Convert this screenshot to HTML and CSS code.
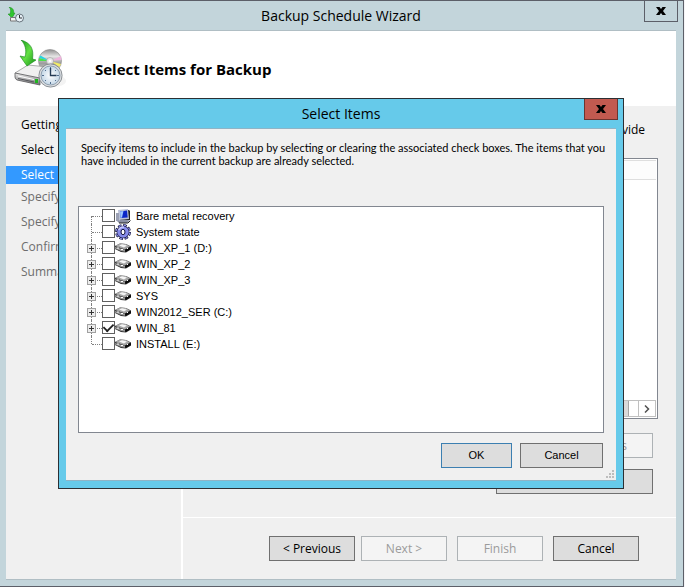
FILE: index.html
```html
<!DOCTYPE html>
<html lang="en">
<head>
<meta charset="utf-8">
<title>Backup Schedule Wizard</title>
<link rel="stylesheet" href="styles.css">
</head>
<body>
<svg class="defs" aria-hidden="true">
  <defs>
    <symbol id="disk" viewBox="0 0 16 16">
      <path d="M0 6 5 3.500 11 4 16 6.500V9.500L11 12.500 6 12 0 9Z" fill="#2c2c2c"/>
      <path d="M0 6 5 3.500 11 4 15 6.500 10 9.500Z" fill="#a8a8a8"/>
      <path d="M4 5.500 7 4.200 12 5.500 9 7.500Z" fill="#f4f4f4"/>
      <path d="M0 7 10 9.800V11.800L6 11 0 8.500Z" fill="#9a9a9a"/>
      <path d="M10 9.800 16 7V9L10.500 12Z" fill="#0a0a0a"/>
      <path d="M2 8h2M6 9.500h2M12 8.500h1" stroke="#fff"/>
    </symbol>
    <symbol id="computer" viewBox="0 0 16 16">
      <path d="M4 3 14 2 15 3V12L5 13Z" fill="#222"/>
      <path d="M3 2 13 1 14 11 4 12Z" fill="#b9c0d6"/>
      <path d="M5 3.500 12 2.500 12.700 9.500 5.500 10Z" fill="#0a25c8"/>
      <path d="M5 3.500 8.500 3 7 9.500 5.500 10Z" fill="#9cc6ff"/>
      <path d="M1 5h3v8H1Z" fill="#9aa0b4"/>
      <path d="M2 13 7 11.500 15 12.500 12 15 4 15Z" fill="#8a90a4"/>
      <path d="M4 15h9l2.500-2.500" fill="none" stroke="#222"/>
    </symbol>
    <symbol id="gear" viewBox="0 0 16 16">
      <circle cx="8" cy="8" r="6.800" fill="none" stroke="#15153c" stroke-width="2.400" stroke-dasharray="3.600 1.740"/>
      <circle cx="8" cy="8" r="6.800" fill="none" stroke="#8d92ea" stroke-width="1.400" stroke-dasharray="2.200 3.140" stroke-dashoffset="-.700"/>
      <circle cx="8" cy="8" r="6.300" fill="#15153c"/>
      <circle cx="8" cy="8" r="5.800" fill="#868bea"/>
      <path d="M3.700 6A5 5 0 0 1 9 3.200" fill="none" stroke="#c3c6ff" stroke-width="1.600"/>
      <ellipse cx="8" cy="8" rx="2" ry="2.700" fill="#fff" stroke="#15153c"/>
    </symbol>
    <symbol id="close" viewBox="0 0 10 8">
      <path d="M0 0h3.500L5 2 6.500 0H10L7 4l3 4H6.500L5 6 3.500 8H0l3-4Z" fill="#000"/>
    </symbol>
  </defs>
</svg>

<main class="window">
  <header class="titlebar">
    <svg class="app-icon" viewBox="0 0 16 16" aria-hidden="true">
      <path d="M1 0C5 1 6 3 5.500 6H7L4 11 0 7h2C3 4 3 2 1 0Z" fill="#2fc52f" stroke="#168a16" stroke-width=".5"/>
      <path d="M2.500 10.500h6v3.500h-6Z" fill="#f2f2f2" stroke="#777"/>
      <circle cx="11.500" cy="11" r="4" fill="#e7f1f8" stroke="#68747c"/>
      <path d="M11.500 8v3H14" fill="none" stroke="#333"/>
    </svg>
    <h1 class="title">Backup Schedule Wizard</h1>
    <button class="close" type="button" aria-label="Close wizard"><svg class="close-icon" aria-hidden="true"><use href="#close"/></svg></button>
  </header>

  <div class="content">
    <div class="banner">
      <svg class="banner-icon" viewBox="0 0 52 50" aria-hidden="true">
        <defs>
          <linearGradient id="arrow" x1="0" y1="0" x2="1" y2="1"><stop offset="0" stop-color="#159a18"/><stop offset=".5" stop-color="#63e044"/><stop offset="1" stop-color="#128d13"/></linearGradient>
          <linearGradient id="disc" x1="0" y1="0" x2="0" y2="1"><stop offset="0" stop-color="#8f8f8f"/><stop offset=".3" stop-color="#e4e4e4"/><stop offset=".6" stop-color="#9c9c9c"/><stop offset="1" stop-color="#e0e0e0"/></linearGradient>
          <linearGradient id="front" x1="0" y1="0" x2="0" y2="1"><stop offset="0" stop-color="#ededed"/><stop offset="1" stop-color="#6f6f72"/></linearGradient>
          <radialGradient id="face"><stop offset="0" stop-color="#fff"/><stop offset="1" stop-color="#c3d6e6"/></radialGradient>
        </defs>
        <ellipse cx="39" cy="41" rx="13" ry="6" fill="#f3f3f3"/>
        <circle cx="36" cy="21" r="11.500" fill="url(#disc)" stroke="#8a8a8a" stroke-width=".6"/>
        <path d="M36 21 25 18 26.500 15.500Z" fill="#27d3e2"/>
        <path d="M36 21 24.500 21 25 18Z" fill="#4ee04a"/>
        <path d="M36 21 47 16 47.500 20Z" fill="#eeb4dc"/>
        <path d="M36 21 47 24 45.500 27Z" fill="#f2ec65"/>
        <circle cx="36" cy="21" r="3.500" fill="#e8e8e8" stroke="#999" stroke-width=".6"/>
        <circle cx="36" cy="21" r="1.300" fill="#fff"/>
        <path d="M1 33 14 25 34 27 27 40Z" fill="#f0f0f0" stroke="#8c8c8c" stroke-width=".7"/>
        <path d="M1 33 26 38V45L3 40Q1 39 1 37Z" fill="url(#front)" stroke="#59595c" stroke-width=".8"/>
        <path d="M4 36 20 39.500" stroke="#fff" stroke-width="1"/>
        <path d="M4 38.500 20 42" stroke="#55565a" stroke-width="1"/>
        <path d="M21 39h3v4h-3Z" fill="#1fb51f"/>
        <path d="M7 0C17 3 20 9 18.500 19L22 20 13 26 6 16 11 17C13 10 11 4 7 0Z" fill="url(#arrow)" stroke="#14851a" stroke-width=".6"/>
        <circle cx="36.500" cy="35.500" r="11.600" fill="#d9dcdf" stroke="#777d84" stroke-width=".8"/>
        <circle cx="36.500" cy="35.500" r="9.500" fill="url(#face)" stroke="#7f90a2" stroke-width=".8"/>
        <path d="M36.500 27v2M36.500 42v2M28 35.500h2M43 35.500h2M31 30l1 1M42 30l-1 1M31 41l1-1M42 41l-1-1" stroke="#516d8e"/>
        <path d="M36.500 28v7.500h6" fill="none" stroke="#243b55" stroke-width="1.400"/>
      </svg>
      <h2 class="heading">Select Items for Backup</h2>
    </div>

    <div class="body">
      <nav class="steps">
        <a class="step done" href="#">Getting</a>
        <a class="step done" href="#">Select B</a>
        <a class="step current" href="#" aria-current="step">Select I</a>
        <a class="step" href="#">Specify</a>
        <a class="step" href="#">Specify</a>
        <a class="step" href="#">Confirm</a>
        <a class="step" href="#">Summa</a>
      </nav>
      <div class="page">
        <section class="pane">
          <p class="hint">provide</p>
          <div class="items">
            <div class="items-head"></div>
            <div class="scroll">
              <span class="thumb"></span>
              <button class="scroll-next" type="button" aria-label="Scroll right"><svg class="chevron" viewBox="0 0 6 8" aria-hidden="true"><path d="M1 .5 4.500 4 1 7.500" fill="none" stroke="#505050" stroke-width="1.500"/></svg></button>
            </div>
          </div>
          <button class="btn remove" type="button" disabled>Items</button>
          <button class="btn advanced" type="button" aria-label="Advanced"></button>
        </section>
        <footer class="actions">
          <button class="btn" type="button">&lt; Previous</button>
          <button class="btn" type="button" disabled>Next &gt;</button>
          <button class="btn apart" type="button" disabled>Finish</button>
          <button class="btn apart" type="button">Cancel</button>
        </footer>
      </div>
    </div>
  </div>

  <div class="dialog" role="dialog" aria-labelledby="dialog-title">
    <header class="titlebar dialog-bar">
      <h2 class="title" id="dialog-title">Select Items</h2>
      <button class="close danger" type="button" aria-label="Close dialog"><svg class="close-icon" aria-hidden="true"><use href="#close"/></svg></button>
    </header>
    <div class="dialog-body">
      <p class="intro">Specify items to include in the backup by selecting or clearing the associated check boxes. The items that you have included in the current backup are already selected.</p>
      <ul class="tree">
        <li class="node"><span class="branch"></span><input class="check" type="checkbox" id="n1"><svg class="icon" aria-hidden="true"><use href="#computer"/></svg><label class="name" for="n1">Bare metal recovery</label></li>
        <li class="node"><span class="branch"></span><input class="check" type="checkbox" id="n2"><svg class="icon" aria-hidden="true"><use href="#gear"/></svg><label class="name" for="n2">System state</label></li>
        <li class="node"><span class="branch"><button class="expand" type="button" aria-label="Expand"></button></span><input class="check" type="checkbox" id="n3"><svg class="icon" aria-hidden="true"><use href="#disk"/></svg><label class="name" for="n3">WIN_XP_1 (D:)</label></li>
        <li class="node"><span class="branch"><button class="expand" type="button" aria-label="Expand"></button></span><input class="check" type="checkbox" id="n4"><svg class="icon" aria-hidden="true"><use href="#disk"/></svg><label class="name" for="n4">WIN_XP_2</label></li>
        <li class="node"><span class="branch"><button class="expand" type="button" aria-label="Expand"></button></span><input class="check" type="checkbox" id="n5"><svg class="icon" aria-hidden="true"><use href="#disk"/></svg><label class="name" for="n5">WIN_XP_3</label></li>
        <li class="node"><span class="branch"><button class="expand" type="button" aria-label="Expand"></button></span><input class="check" type="checkbox" id="n6"><svg class="icon" aria-hidden="true"><use href="#disk"/></svg><label class="name" for="n6">SYS</label></li>
        <li class="node"><span class="branch"><button class="expand" type="button" aria-label="Expand"></button></span><input class="check" type="checkbox" id="n7"><svg class="icon" aria-hidden="true"><use href="#disk"/></svg><label class="name" for="n7">WIN2012_SER (C:)</label></li>
        <li class="node"><span class="branch"><button class="expand" type="button" aria-label="Expand"></button></span><input class="check" type="checkbox" id="n8" checked><svg class="icon" aria-hidden="true"><use href="#disk"/></svg><label class="name" for="n8">WIN_81</label></li>
        <li class="node"><span class="branch"></span><input class="check" type="checkbox" id="n9"><svg class="icon" aria-hidden="true"><use href="#disk"/></svg><label class="name" for="n9">INSTALL (E:)</label></li>
      </ul>
      <div class="dialog-actions">
        <button class="btn ok" type="button">OK</button>
        <button class="btn cancel" type="button">Cancel</button>
      </div>
      <svg class="grip" viewBox="0 0 8 8" aria-hidden="true"><path d="M6 0h2v2H6zM3 3h2v2H3zM6 3h2v2H6zM0 6h2v2H0zM3 6h2v2H3zM6 6h2v2H6z" fill="#bdbdbd"/></svg>
    </div>
  </div>
</main>
</body>
</html>
```

FILE: styles.css
```css
* { box-sizing: border-box; }

body {
  margin: 0;
  padding-right: 1px;
  background: #f4f4f6;
  color: #000;
  font: 12px/16px "Open Sans", "Noto Sans", sans-serif;
}

h1, h2, p, ul { margin: 0; padding: 0; }
button { font: inherit; padding: 0; }
.defs { position: absolute; width: 0; height: 0; }

/* Main window */
.window {
  position: relative;
  display: flex;
  flex-direction: column;
  min-height: 100vh;
  padding: 0 7px 6px 6px;
  background: #c3d5db;
  border: solid #5c5f68;
  border-width: 1px 1px 1px 0;
}

.titlebar {
  position: relative;
  display: flex;
  justify-content: center;
  align-items: center;
  height: 29px;
}
.title { font-size: 14px; line-height: 20px; font-weight: 400; }
.app-icon { position: absolute; left: 2px; top: 6px; width: 16px; height: 16px; }
.close {
  position: absolute;
  top: 0;
  right: -2px;
  display: grid;
  place-items: center;
  width: 34px;
  height: 21px;
  background: none;
  border: 1px solid #5c5f68;
  border-top: 0;
}
.close-icon { width: 10px; height: 8px; }

.content {
  flex: 1;
  display: flex;
  flex-direction: column;
  background: #f0f0f0;
  border: solid #b0bec4;
  border-width: 1px 0;
}
.banner {
  display: flex;
  align-items: center;
  gap: 29px;
  height: 75px;
  padding-left: 8px;
  background: #fff;
}
.banner-icon { width: 52px; height: 50px; margin-bottom: 8px; }
.heading { font-size: 15px; line-height: 20px; font-weight: 700; }

.body { flex: 1; display: flex; }
.steps {
  flex: 0 0 177px;
  display: flex;
  flex-direction: column;
  gap: 7px;
  padding-top: 10px;
  border-right: 2px solid #fff;
}
.step {
  padding-left: 15px;
  line-height: 18px;
  color: #6d6d6d;
  text-decoration: none;
  white-space: nowrap;
  overflow: hidden;
}
.done { color: #000; }
.current { margin-bottom: -3px; background: #3399ff; color: #fff; }

.page { flex: 1; display: flex; flex-direction: column; }
.pane {
  flex: 1;
  display: flex;
  flex-direction: column;
  align-items: flex-end;
  padding: 16px 23px 0 16px;
}
.hint { padding-right: 8px; }
.items {
  display: flex;
  flex-direction: column;
  align-self: stretch;
  height: 261px;
  margin: 20px -5px 14px 0;
  padding: 1px;
  background: #fff;
  border: 1px solid #828790;
}
.items-head { height: 20px; background: #fcfcfc; border: solid #dedede; border-width: 1px 0; }
.scroll { display: flex; justify-content: space-between; height: 17px; margin-top: auto; border: 1px solid #c0c0c0; }
.thumb { width: 427px; background: #dadada; border-right: 1px solid #a6a6a6; }
.scroll-next {
  display: grid;
  place-items: center;
  width: 17px;
  background: #fff;
  border: 0;
  border-left: 1px solid #c0c0c0;
}
.chevron { width: 6px; height: 8px; }

.btn {
  width: 86px;
  height: 25px;
  background: #dddddd;
  border: 1px solid #707070;
  color: #000;
}
.btn:disabled { background: #f4f4f4; border-color: #adb2b5; color: #9b9b9b; }
.remove { width: 83px; margin-bottom: 11px; }
.advanced { width: 157px; }

.actions {
  display: flex;
  justify-content: flex-end;
  gap: 6px;
  height: 62px;
  padding: 18px 37px 0 0;
  border-top: 1px solid #fff;
}
.apart { margin-left: 4px; }

/* Modal dialog over the window */
.dialog {
  position: absolute;
  top: 97px;
  left: 58px;
  right: 59px;
  padding: 0 7px 7px;
  background: #66caea;
  border: 1px solid #2b2f33;
}
.danger { right: -2px; background: #c25a50; border-color: #6b3530; }
.dialog-body {
  position: relative;
  padding: 11px 12px 12px;
  background: #f0f0f0;
  border: solid #8fb4c6;
  border-width: 1px 0;
  font: 11px/13px "Liberation Sans", Arial, sans-serif;
}
.intro {
  min-height: 66px;
  margin-right: -8px;
  padding: 1px 0 0 3px;
  font-family: Lato, "Liberation Sans", sans-serif;
}
.tree {
  min-height: 227px;
  padding: 1px 8px;
  background: #fff;
  border: 1px solid #828790;
  list-style: none;
}
.node { display: flex; align-items: center; height: 16px; }
.branch {
  position: relative;
  display: flex;
  align-items: center;
  width: 15px;
  height: 16px;
}
.branch::before {
  content: "";
  position: absolute;
  left: 4px;
  top: 0;
  bottom: 0;
  border-left: 1px dotted #808080;
}
.branch::after {
  content: "";
  position: absolute;
  left: 5px;
  right: 0;
  top: 8px;
  border-top: 1px dotted #808080;
}
.node:first-child .branch::before { top: 8px; }
.node:last-child .branch::before { bottom: 8px; }
.expand {
  position: relative;
  z-index: 1;
  width: 9px;
  height: 9px;
  border: 1px solid #a0a0a0;
  background:
    linear-gradient(#333, #333) center / 5px 1px no-repeat,
    linear-gradient(#333, #333) center / 1px 5px no-repeat,
    #ececec;
}
.check {
  appearance: none;
  display: grid;
  place-items: center;
  width: 13px;
  height: 13px;
  margin: 0 0 1px;
  background: #fff;
  border: 1px solid #606060;
}
.check:checked::before {
  content: "";
  width: 9px;
  height: 5px;
  margin-bottom: 3px;
  border: solid #222;
  border-width: 0 0 2px 2px;
  transform: rotate(-45deg) scale(.9);
}
.icon { width: 16px; height: 16px; }
.name { padding-left: 5px; line-height: 16px; }

.dialog-actions {
  display: flex;
  justify-content: flex-end;
  gap: 8px;
  padding: 10px 1px 0 0;
}
.ok { width: 71px; border-color: #3c7fb1; }
.cancel { width: 83px; }
.grip { position: absolute; right: 2px; bottom: 2px; width: 8px; height: 8px; }
```
